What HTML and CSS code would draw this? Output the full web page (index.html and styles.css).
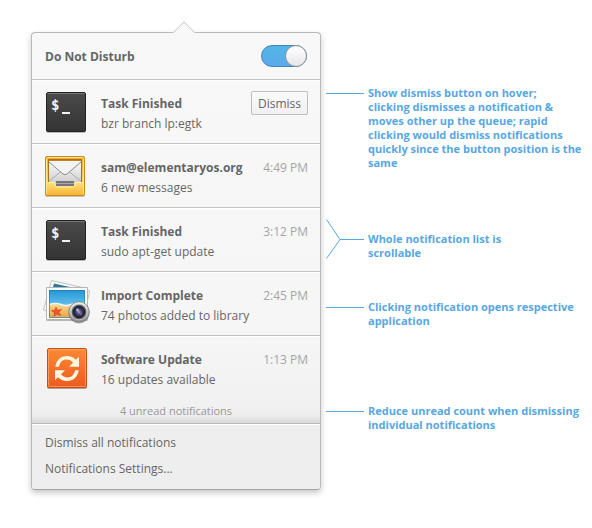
FILE: index.html
```html
<!DOCTYPE html>
<html lang="en">
<head>
<meta charset="utf-8">
<meta name="viewport" content="width=device-width, initial-scale=1">
<title>Notifications</title>
<link rel="stylesheet" href="styles.css">
</head>
<body>
<svg class="defs" aria-hidden="true">
  <defs>
    <linearGradient id="term" x2="0" y2="1"><stop offset="0" stop-color="#4b4b4b"/><stop offset="1" stop-color="#333"/></linearGradient>
    <linearGradient id="gold" x2="0" y2="1"><stop offset="0" stop-color="#eda92c"/><stop offset=".6" stop-color="#fbd55c"/><stop offset="1" stop-color="#f6b73a"/></linearGradient>
    <linearGradient id="tray" x2="0" y2="1"><stop offset="0" stop-color="#ffe27a"/><stop offset="1" stop-color="#f6b436"/></linearGradient>
    <linearGradient id="paper" x2="0" y2="1"><stop offset="0" stop-color="#fafafa"/><stop offset="1" stop-color="#d2d2d2"/></linearGradient>
    <linearGradient id="sky" x2="0" y2="1"><stop offset="0" stop-color="#2196d8"/><stop offset="1" stop-color="#9be0fa"/></linearGradient>
    <linearGradient id="sand" x2="0" y2="1"><stop offset="0" stop-color="#fbdc96"/><stop offset="1" stop-color="#e9a545"/></linearGradient>
    <linearGradient id="metal" x2="0" y2="1"><stop offset="0" stop-color="#f4f4f4"/><stop offset="1" stop-color="#8c8c8c"/></linearGradient>
    <radialGradient id="lens"><stop offset="0" stop-color="#a9a6dc"/><stop offset=".4" stop-color="#50507c"/><stop offset="1" stop-color="#1b1c30"/></radialGradient>
    <linearGradient id="orange" x2="0" y2="1"><stop offset="0" stop-color="#fb8a33"/><stop offset="1" stop-color="#ee5a20"/></linearGradient>
    <symbol id="terminal" viewBox="0 0 48 48">
      <rect x="4" y="5" width="40" height="40" rx="2" fill="#000" opacity=".25"/>
      <rect x="4.500" y="4.500" width="39" height="39" rx="1.500" fill="url(#term)" stroke="#222"/>
      <path d="M5.500 5.500h37" stroke="#777"/>
      <text class="prompt" x="9" y="22">$</text>
      <path d="M20 25h8" stroke="#f2f2f2" stroke-width="2"/>
    </symbol>
  </defs>
</svg>
<main class="page">
  <section class="popover" aria-label="Notifications">
    <svg class="arrow" viewBox="0 0 24 12" aria-hidden="true"><path d="M1 12 12 .7 23 12z" fill="#f8f8f8"/><path d="M0 11.500h1.500L12 .7l10.500 10.800H24" fill="none" stroke="#c2c2c2"/></svg>
    <header class="header">
      <label for="dnd">Do Not Disturb</label>
      <input id="dnd" class="switch" type="checkbox" role="switch" checked>
    </header>
    <ul class="list">
      <li class="item">
        <svg class="icon" aria-hidden="true"><use href="#terminal"/></svg>
        <div class="text"><strong>Task Finished</strong><span>bzr branch lp:egtk</span></div>
        <button class="dismiss" type="button">Dismiss</button>
      </li>
      <li class="item">
        <svg class="icon" viewBox="0 0 48 48" aria-hidden="true">
          <rect x="3" y="5" width="40" height="40" rx="2" fill="#8a5a10" opacity=".35"/>
          <rect x="3.500" y="4.500" width="39" height="39" rx="1.500" fill="url(#gold)" stroke="#cb8a1c"/>
          <rect x="4.500" y="5.500" width="37" height="37" rx="1" fill="none" stroke="#ffe596"/>
          <path d="M6.500 7.500h33V30h-33z" fill="#c58020" stroke="#b07018"/>
          <path d="M7 9h32v21H7z" fill="url(#paper)"/>
          <path d="m7 29 11.500-9M39 29l-11.500-9" stroke="#aaa" fill="none"/>
          <path d="m7 10 14 12q2 1.600 4 0L39 10" fill="#f3f3f3" stroke="#8e8e8e"/>
          <path d="M14 29h18v5H14z" fill="#777"/><path d="M14 31.500h18" stroke="#a9a9a9"/>
          <path d="M5 30h8.500v2q0 2.500 2.500 2.500h14q2.500 0 2.500-2.500v-2H41v13H5z" fill="url(#tray)"/>
          <path d="M5 30.500h8V33q0 2 2.500 2h15q2.500 0 2.500-2v-2.500h8" fill="none" stroke="#fff0b0"/>
        </svg>
        <div class="text"><strong>sam@elementaryos.org</strong><span>6 new messages</span></div>
        <time>4:49 PM</time>
      </li>
      <li class="item">
        <svg class="icon" aria-hidden="true"><use href="#terminal"/></svg>
        <div class="text"><strong>Task Finished</strong><span>sudo apt-get update</span></div>
        <time>3:12 PM</time>
      </li>
      <li class="item">
        <svg class="icon" viewBox="0 0 48 48" aria-hidden="true">
          <path d="m11 3 37 8-8 30-32-4z" fill="#f1f1f1" stroke="#bbb" stroke-width=".8"/>
          <path d="m9.500.5 31 7-7 30-32-7.500z" fill="#fafafa" stroke="#b5b5b5" stroke-width=".8"/>
          <path d="m12 3.500 25 5.500-2 8H8z" fill="#287b9c"/>
          <path d="M4.500 8h41v33h-41z" fill="#777" opacity=".5"/>
          <path d="M4.500 7.500h41v32h-41z" fill="#fafafa" stroke="#b5b5b5"/>
          <path d="M7 10h36v27.500H7z" fill="url(#sky)"/>
          <path d="M7 25q7-2 12 0t10 0 14-2v14.500H7z" fill="url(#sand)"/>
          <path d="M7 24.500q7-2 12 0t10 0 14-2" stroke="#eefbff" stroke-width="1.500" fill="none"/>
          <path d="M7.500 10.500h35v27h-35z" fill="none" stroke="#287898" stroke-opacity=".65"/>
          <path d="m14 27 1.500 3.200 4.200-.7-2.800 2.800 2 3-4-1-3 2 .5-3.500-3-2.200 3.500-.4z" fill="#ed5726" stroke="#cf431d" stroke-width=".6"/>
          <circle cx="37" cy="33" r="10.500" fill="#333" opacity=".3"/>
          <circle cx="37" cy="32" r="10.300" fill="url(#metal)" stroke="#777" stroke-width=".8"/>
          <circle cx="37" cy="32" r="7.800" fill="#5c5c60" stroke="#ddd" stroke-width=".7"/>
          <circle cx="37" cy="32" r="5.500" fill="url(#lens)" stroke="#17182a"/>
          <circle cx="35.500" cy="30" r="1.400" fill="#d9dbff" opacity=".75"/>
          <circle cx="39" cy="34" r="1" fill="#c85c88" opacity=".8"/>
        </svg>
        <div class="text"><strong>Import Complete</strong><span>74 photos added to library</span></div>
        <time>2:45 PM</time>
      </li>
      <li class="item">
        <svg class="icon" viewBox="0 0 48 48" aria-hidden="true">
          <rect x="5" y="5" width="40" height="40" rx="2" fill="#50200c" opacity=".4"/>
          <rect x="5.500" y="4.500" width="39" height="39" rx="1.500" fill="url(#orange)" stroke="#c64d1b"/>
          <rect x="6.500" y="5.500" width="37" height="37" rx="1" fill="none" stroke="#ffae6b" stroke-opacity=".7"/>
          <path id="turn" d="M13.300 22.700C14.500 15.500 19 12 24.800 12c3.800 0 7 1.400 9.200 3.700l3-3v10H27l4-4C29.500 16.700 27.300 15.500 24.500 15.500c-4 0-6.500 2.500-7.500 7.200z" fill="#fff6e0"/>
          <use href="#turn" transform="rotate(180 25 24.500)"/>
        </svg>
        <div class="text"><strong>Software Update</strong><span>16 updates available</span></div>
        <time>1:13 PM</time>
      </li>
    </ul>
    <p class="unread">4 unread notifications</p>
    <footer class="footer">
      <button type="button">Dismiss all notifications</button>
      <button type="button">Notifications Settings...</button>
    </footer>
  </section>
  <aside class="notes">
    <p class="note hover-note">Show dismiss button on hover;<br>clicking dismisses a notification &amp;<br>moves other up the queue; rapid<br>clicking would dismiss notifications<br>quickly since the button position is the<br>same</p>
    <div class="note scroll-note">
      <svg class="fork" viewBox="0 0 14 40" aria-hidden="true"><path d="M.5.500 14 20.500 .5 39.500" fill="none" stroke="#57a7e3"/></svg>
      Whole notification list is<br>scrollable
    </div>
    <p class="note open-note">Clicking notification opens respective<br>application</p>
    <p class="note count-note">Reduce unread count when dismissing<br>individual notifications</p>
  </aside>
</main>
</body>
</html>
```
FILE: styles.css
```css
*,
*::before {
  box-sizing: border-box;
}

body {
  margin: 0;
  background: #fff;
  color: #666;
  font: 12px/20px "Open Sans", "Noto Sans", sans-serif;
}

p,
ul {
  margin: 0;
  padding: 0;
}

button {
  font: inherit;
  color: inherit;
  cursor: pointer;
}

.defs {
  position: absolute;
  width: 0;
  height: 0;
}

.page {
  display: grid;
  grid-template-columns: minmax(0, 290px) minmax(0, 1fr);
  align-items: start;
  gap: 5px;
  padding: 32px 0 32px 31px;
}

.popover {
  position: relative;
  border: 1px solid #b9b9b9;
  border-bottom-color: #a2a2a2;
  border-radius: 4px;
  background: linear-gradient(#f8f8f8, #f6f6f6 65%, #f0f0f0 85%);
  box-shadow: 0 3px 6px rgba(0, 0, 0, 0.22);
}

.arrow {
  position: absolute;
  top: -12px;
  left: 140px;
  width: 24px;
  height: 12px;
}

.header {
  display: flex;
  align-items: center;
  justify-content: space-between;
  height: 46px;
  padding: 0 13px;
  font-weight: 700;
}

.header label {
  padding-top: 2px;
}

.switch {
  appearance: none;
  display: flex;
  justify-content: flex-end;
  width: 46px;
  height: 22px;
  margin: 0;
  border: 1px solid #4385b0;
  border-radius: 11px;
  background: linear-gradient(#53b5e9, #5ba9e9);
}

.switch::before {
  content: "";
  width: 22px;
  height: 22px;
  margin: -1px;
  border: 1px solid #8995a0;
  border-radius: 50%;
  background: linear-gradient(#fff, #e6e6e6);
}

.switch:not(:checked) {
  justify-content: flex-start;
  background: #ddd;
}

.list {
  list-style: none;
}

.item {
  display: flex;
  align-items: flex-start;
  height: 64px;
  padding: 8px 12px 7px 10px;
  border-top: 1px solid #c3c3c3;
  box-shadow: inset 0 1px #fff;
}

.icon {
  flex: none;
  width: 48px;
  height: 48px;
  margin-right: 11px;
}

.prompt {
  fill: #f5f5f5;
  font: bold 14px "DejaVu Sans Mono", monospace;
}

.text {
  display: flex;
  flex: 1;
  flex-direction: column;
  padding-top: 6px;
  white-space: nowrap;
}

.item time {
  padding-top: 6px;
  color: #a5a5a5;
}

.dismiss {
  height: 24px;
  margin-top: 3px;
  padding: 1px 6px 0;
  border: 1px solid #bfbfbf;
  border-radius: 2px;
  background: linear-gradient(#fafafa, #f1f1f1);
  line-height: 20px;
}

.unread {
  height: 24px;
  padding-top: 2px;
  background: linear-gradient(transparent 40%, #ececec 70%, #d9d9d9);
  color: #999;
  font-size: 11px;
  text-align: center;
}

.footer {
  display: flex;
  flex-direction: column;
  padding: 6px 0 7px;
  border-top: 1px solid #bbb;
  border-radius: 0 0 3px 3px;
  background: #eee;
  box-shadow: inset 0 1px #fff;
}

.footer button {
  padding: 3px 13px;
  border: 0;
  background: none;
  text-align: left;
}

.notes {
  padding-top: 54px;
  color: #57a7e3;
  font-size: 11px;
  font-weight: 700;
  line-height: 14px;
  white-space: nowrap;
}

.note {
  position: relative;
  padding-left: 42px;
}

.note::before {
  content: "";
  position: absolute;
  top: 7px;
  left: 0;
  width: 38px;
  height: 1px;
  background: #57a7e3;
}

.scroll-note {
  margin-top: 62px;
}

.scroll-note::before {
  left: 14px;
  width: 24px;
}

.fork {
  position: absolute;
  top: -13px;
  left: 0;
  width: 14px;
  height: 40px;
}

.open-note {
  margin-top: 40px;
}

.count-note {
  margin-top: 76px;
}
```
